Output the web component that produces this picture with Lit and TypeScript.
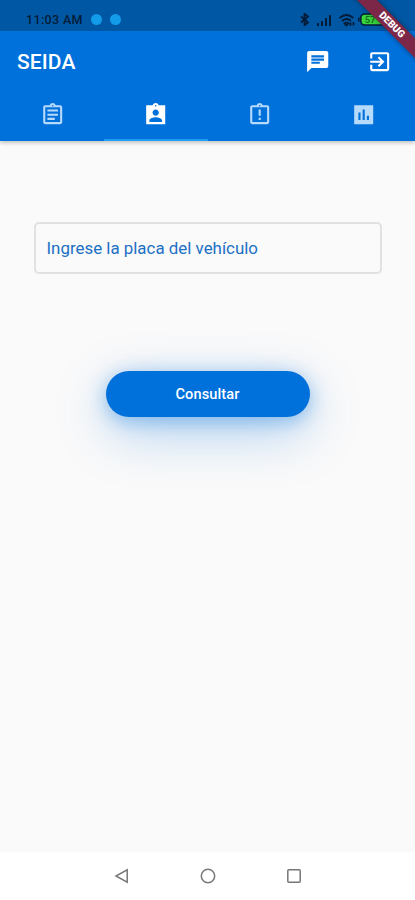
import { LitElement, html, css, svg } from "lit";
import { customElement } from "lit/decorators.js";

const icons = {
  chat: "M20 2H4c-1.1 0-1.99.9-1.99 2L2 22l4-4h14c1.1 0 2-.9 2-2V4c0-1.1-.9-2-2-2zM6 9h12v2H6V9zm8 5H6v-2h8v2zm4-6H6V6h12v2z",
  exit: "M10.09 15.59L11.5 17l5-5-5-5-1.41 1.41L12.67 11H3v2h9.67l-2.58 2.59zM19 3H5c-1.11 0-2 .9-2 2v4h2V5h14v14H5v-4H3v4c0 1.1.89 2 2 2h14c1.1 0 2-.9 2-2V5c0-1.1-.9-2-2-2z",
  assignment: "M7 15h7v2H7zm0-4h10v2H7zm0-4h10v2H7zm12-4h-4.18C14.4 1.84 13.3 1 12 1c-1.3 0-2.4.84-2.82 2H5c-1.1 0-2 .9-2 2v14c0 1.1.9 2 2 2h14c1.1 0 2-.9 2-2V5c0-1.1-.9-2-2-2zm-7-.25c.41 0 .75.34.75.75s-.34.75-.75.75-.75-.34-.75-.75.34-.75.75-.75zM19 19H5V5h14v14z",
  person: "M21 3h-6.18C14.4 1.84 13.3 1 12 1s-2.400.84-2.820 2H3v18h18V3zm-9-.25c.41 0 .75.34.75.75s-.34.75-.75.75-.75-.34-.75-.75.34-.75.75-.75zM12 7c1.66 0 3 1.34 3 3s-1.34 3-3 3-3-1.34-3-3 1.34-3 3-3zm6 12H6v-1.400c0-2 4-3.100 6-3.100s6 1.100 6 3.100V19z",
  late: "M11 15h2v2h-2zm0-8h2v6h-2zm8-4h-4.18C14.4 1.84 13.3 1 12 1c-1.3 0-2.4.84-2.82 2H5c-1.1 0-2 .9-2 2v14c0 1.1.9 2 2 2h14c1.1 0 2-.9 2-2V5c0-1.1-.9-2-2-2zm-7-.25c.41 0 .75.34.75.75s-.34.75-.75.75-.75-.34-.75-.75.34-.75.75-.75zM19 19H5V5h14v14z",
  chart: "M3 3v18h18V3H3zm6 14H7v-7h2v7zm4 0h-2V7h2v10zm4 0h-2v-4h2v4z",
};
const icon = (d: string) => html`<svg class="icon" viewBox="0 0 24 24">${svg`<path fill-rule="evenodd" d=${d}></path>`}</svg>`;

@customElement("app-root")
export class AppRoot extends LitElement {
  static styles = css`
    :host { display: flex; flex-direction: column; position: relative; width: 415px; height: 900px; overflow: hidden; background: #fafafa; font-family: Roboto, sans-serif; }
    * { box-sizing: border-box; }
    svg { display: block; flex: none; }
    .header { background: #0070db; height: 141px; flex: none; box-shadow: 0 2px 4px rgba(0,0,0,.22); }
    .status { height: 31px; background: #0057a3; display: flex; align-items: center; padding: 8px 29px 0 26px; color: #041c38; }
    .time { font-size: 12.5px; line-height: 14px; letter-spacing: .35px; font-weight: 500; width: 65px; white-space: nowrap; }
    .dot { width: 11px; height: 11px; border-radius: 50%; background: #129be9; margin-right: 8px; }
    .gap { flex: 1; }
    .bar { height: 60px; display: flex; align-items: center; padding: 1px 23px 0 17px; color: #fff; }
    .title { flex: 1; font-size: 21px; font-weight: 500; line-height: 26px; letter-spacing: .1px; padding-top: 1px; }
    .icon { width: 25.4px; height: 25.4px; fill: currentColor; }
    .bar .icon + .icon { margin-left: 36px; }
    .tabs { display: flex; height: 50px; }
    .tab { flex: 1; display: flex; justify-content: center; padding: 11px 0 0 1px; color: #b5dafb; border-bottom: 2px solid transparent; }
    .tab.active { color: #fff; border-color: #1e9df3; }
    .content { flex: 1; display: flex; flex-direction: column; align-items: center; padding-top: 81px; }
    .field { width: 348px; height: 52px; border: 2px solid #e1e1e1; border-radius: 5px; padding: 0 11px; display: flex; align-items: center; font-size: 16.9px; color: #1c70c4; }
    .button { margin-top: 97px; width: 204px; height: 46px; border: 0; border-radius: 23px; background: #0070db; color: #fff; font: 500 14.6px Roboto, sans-serif; letter-spacing: .1px; box-shadow: 0 16px 54px rgba(0,112,219,.3), 0 4px 20px rgba(0,112,219,.4); }
    .nav { height: 48px; background: #fff; display: flex; justify-content: center; align-items: center; gap: 70px; flex: none; }
    .nav svg { width: 16px; height: 16px; fill: none; stroke: #777; stroke-width: 1.5; }
    .ribbon { position: absolute; right: -46.5px; top: 18px; width: 140px; height: 13.5px; transform: rotate(45deg); background: #7d2748; color: #fff; font-size: 10px; line-height: 13.5px; font-weight: 900; text-align: center; box-shadow: 0 0 5px rgba(0,0,0,.4); }
    .bt { width: 10px; height: 13px; margin-right: 6px; }
    .sig { width: 16px; height: 12px; margin-right: 6px; }
    .wifi { width: 18px; height: 14px; margin-right: 2px; }
    .bat { width: 28px; height: 13px; }
  `;

  render() {
    return html`
      <div class="header">
        <div class="status">
          <span class="time">11:03 AM</span><i class="dot"></i><i class="dot"></i><span class="gap"></span>
          <svg class="bt" viewBox="0 0 10 13" fill="none" stroke="#041c38" stroke-width="1.8"><path d="M1 3.5l7 6-3.5 2.7V.8L8 3.5l-7 6"></path></svg>
          <svg class="sig" viewBox="0 0 16 12" fill="#041c38"><path d="M1 9h2v3H1zM5 7h2v5H5zM9 4h2v8H9zM13 1h2v11h-2z"></path></svg>
          <svg class="wifi" viewBox="0 0 18 14" fill="none" stroke="#041c38" stroke-width="1.7"><path d="M1.5 5.2q7-6.4 14 0M4 8q4.500-4 9 0M6.500 10.500q2-1.800 4 0L8.500 12.500zM12.500 13v-3.500M15.500 9v3.500"></path></svg>
          <svg class="bat" viewBox="0 0 28 13"><rect x="2.800" y="1" width="24" height="11" rx="4" fill="#38d63c" stroke="#041c38" stroke-width="1.600"></rect><path d="M.8 4.500v4" stroke="#041c38" stroke-width="1.600"></path><text x="7" y="9.800" font-size="9" font-weight="700" fill="#14701f">57</text></svg>
        </div>
        <div class="bar"><span class="title">SEIDA</span>${icon(icons.chat)}${icon(icons.exit)}</div>
        <div class="tabs">
          <div class="tab">${icon(icons.assignment)}</div>
          <div class="tab active">${icon(icons.person)}</div>
          <div class="tab">${icon(icons.late)}</div>
          <div class="tab">${icon(icons.chart)}</div>
        </div>
      </div>
      <div class="content">
        <div class="field">Ingrese la placa del vehículo</div>
        <button class="button">Consultar</button>
      </div>
      <div class="nav">
        <svg viewBox="0 0 16 16"><path d="M13.200 1.800v12.400L2 8z"></path></svg>
        <svg viewBox="0 0 16 16"><circle cx="8" cy="8" r="6.700"></circle></svg>
        <svg viewBox="0 0 16 16"><rect x="1.800" y="1.800" width="12.400" height="12.400" rx="1"></rect></svg>
      </div>
      <div class="ribbon">DEBUG</div>
    `;
  }
}
